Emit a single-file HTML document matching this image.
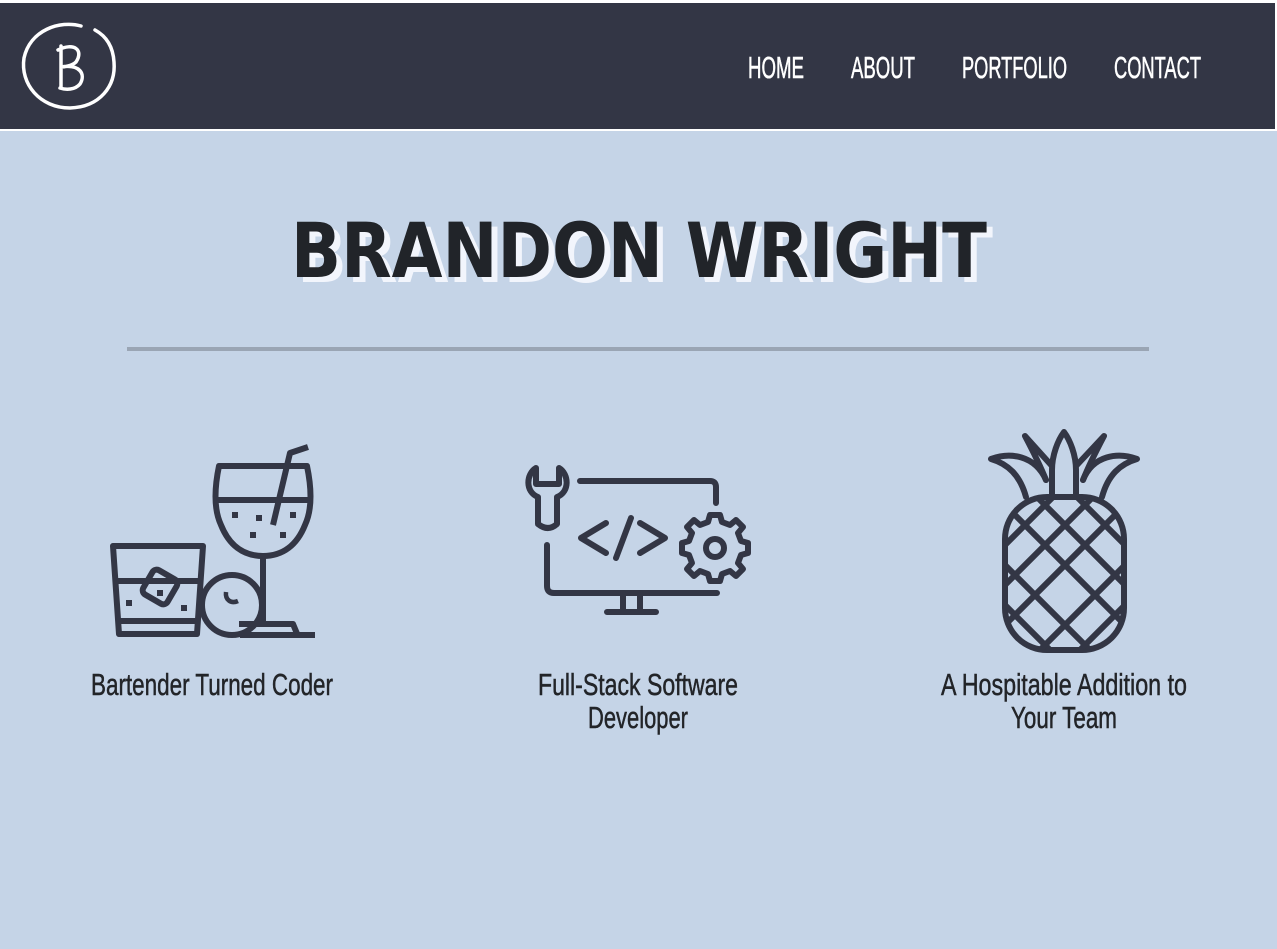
<!DOCTYPE html>
<html><head><meta charset="utf-8"><style>
html,body{margin:0;padding:0;width:1277px;height:949px;overflow:hidden;background:#c5d4e7;}
svg{display:block}
</style></head><body>
<svg width="1277" height="949" viewBox="0 0 1277 949" xmlns="http://www.w3.org/2000/svg">
<rect x="0" y="0" width="1277" height="949" fill="#c5d4e7"/>
<rect x="0" y="0" width="1277" height="131" fill="#ffffff"/>
<rect x="0" y="3" width="1275" height="126" fill="#333645"/>
<!-- logo -->
<g fill="none" stroke="#fff" stroke-width="3.5" stroke-linecap="round">
<path d="M81 26 C60 20 30 30 24 58 C20 84 40 108 70 108 C100 107 116 86 114 62 C113 46 106 36 95 30"/>
<path d="M61 46 L61 88 M58 50 C74 42 84 50 76 62 C72 66 64 67 61 67 M61 67 C80 64 86 74 80 84 C75 90 66 90 60 88"/>
</g>
<!-- nav -->
<g fill="#fff" stroke="#fff" stroke-width="0.6" font-family="'Liberation Sans',sans-serif" font-size="31">
<text x="748" y="78" textLength="56" lengthAdjust="spacingAndGlyphs">HOME</text>
<text x="851" y="78" textLength="64" lengthAdjust="spacingAndGlyphs">ABOUT</text>
<text x="962" y="78" textLength="105" lengthAdjust="spacingAndGlyphs">PORTFOLIO</text>
<text x="1114" y="78" textLength="87" lengthAdjust="spacingAndGlyphs">CONTACT</text>
</g>
<!-- title -->
<g font-family="'DejaVu Sans','Liberation Sans',sans-serif" font-weight="bold" font-size="76">
<text x="297" y="282" textLength="696" lengthAdjust="spacingAndGlyphs" fill="#f2f5fc">BRANDON WRIGHT</text>
<text x="291" y="277" textLength="696" lengthAdjust="spacingAndGlyphs" fill="#212429">BRANDON WRIGHT</text>
</g>
<rect x="127" y="347" width="1022" height="4" fill="#9aa5b4"/>
<!-- cocktail icon -->
<g fill="none" stroke="#333645" stroke-width="6" stroke-linejoin="round" stroke-linecap="butt">
<path d="M113 546 L203 546 L197 634 L119 634 Z"/>
<path d="M114 581 L201 581 M118 621 L198 621"/>
<rect x="146" y="573" width="28" height="28" rx="5" transform="rotate(30 160 587)"/>
<circle cx="232" cy="605" r="30"/>
<path d="M219 466 L307 466 C312 490 312 510 305 525 C297 545 283 556 263 556 C243 556 229 545 221 525 C214 510 214 490 219 466 Z"/>
<path d="M217 500 L309 500"/>
<path d="M263 556 L263 624 L239 624 M263 624 L293 624 L298 636"/>
<path d="M240 635 L315 635"/>
<path d="M308 447 L290 453 L273 525"/>
</g>
<path d="M226 592 C225 600 231 604 238 601" fill="none" stroke="#333645" stroke-width="4.5"/>
<g fill="#333645">
<rect x="126" y="600" width="6" height="6"/><rect x="157" y="590" width="6" height="6"/><rect x="181" y="605" width="6" height="6"/>
<rect x="232" y="512" width="6" height="6"/><rect x="256" y="515" width="6" height="6"/><rect x="290" y="512" width="6" height="6"/>
<rect x="250" y="532" width="6" height="6"/><rect x="280" y="532" width="6" height="6"/>
</g>
<!-- dev icon -->
<g fill="none" stroke="#333645" stroke-width="6" stroke-linejoin="round" stroke-linecap="round">
<path d="M580 481 L710 481 Q716 481 716 487 L716 503"/>
<path d="M547 545 L547 586 Q547 593 554 593 L717 593"/>
<path d="M623 593 L623 612 M640 593 L640 612 M607 612 L656 612"/>
<path d="M536 468 C526 474 525 492 538 497 L538 524 Q548 532 557 524 L557 497 C570 492 569 474 559 468 L559 484 L536 484 Z"/>
<path d="M606 523 L581 538 L606 553 M640 523 L665 538 L640 553 M631 518 L616 558"/>
<path d="M710 515 L720 515 L722 522 L730 525 L736 520 L743 527 L738 533 L741 541 L748 543 L748 553 L741 555 L738 563 L743 569 L736 576 L730 571 L722 574 L720 581 L710 581 L708 574 L700 571 L694 576 L687 569 L692 563 L689 555 L682 553 L682 543 L689 541 L692 533 L687 527 L694 520 L700 525 L708 522 Z"/>
<circle cx="715" cy="548" r="9"/>
</g>
<!-- pineapple -->
<g fill="none" stroke="#333645" stroke-width="6" stroke-linejoin="round" stroke-linecap="round">
<defs><clipPath id="pc"><rect x="1005" y="497" width="119" height="153" rx="42"/></clipPath></defs>
<rect x="1005" y="497" width="119" height="153" rx="42"/>
<g clip-path="url(#pc)">
<path d="M960 520 L1090 650 M960 560 L1090 690 M960 600 L1090 730 M980 480 L1150 650 M1020 480 L1150 610 M1060 480 L1150 570 M1100 480 L1150 530"/>
<path d="M1170 520 L1040 650 M1170 560 L1040 690 M1170 600 L1040 730 M1150 480 L980 650 M1110 480 L980 610 M1070 480 L980 570 M1030 480 L980 530"/>
</g>
<path d="M1052 497 L1052 470 C1052 455 1058 440 1064 432 C1070 440 1076 455 1076 470 L1076 497"/>
<path d="M1052 466 L1025 436 C1035 455 1042 470 1046 480"/>
<path d="M1076 466 L1104 436 C1094 455 1087 470 1083 480"/>
<path d="M1026 497 C1020 475 1008 464 991 459 C1010 452 1035 455 1046 480"/>
<path d="M1102 497 C1108 475 1120 464 1137 459 C1118 452 1093 455 1083 480"/>
</g>
<!-- captions -->
<g fill="#222428" stroke="#222428" stroke-width="0.5" font-family="'Liberation Sans',sans-serif" font-size="31">
<text x="91" y="695" textLength="242" lengthAdjust="spacingAndGlyphs">Bartender Turned Coder</text>
<text x="538" y="695" textLength="200" lengthAdjust="spacingAndGlyphs">Full-Stack Software</text>
<text x="588" y="728" textLength="100" lengthAdjust="spacingAndGlyphs">Developer</text>
<text x="941" y="695" textLength="246" lengthAdjust="spacingAndGlyphs">A Hospitable Addition to</text>
<text x="1011" y="728" textLength="106" lengthAdjust="spacingAndGlyphs">Your Team</text>
</g>
</svg>
</body></html>
